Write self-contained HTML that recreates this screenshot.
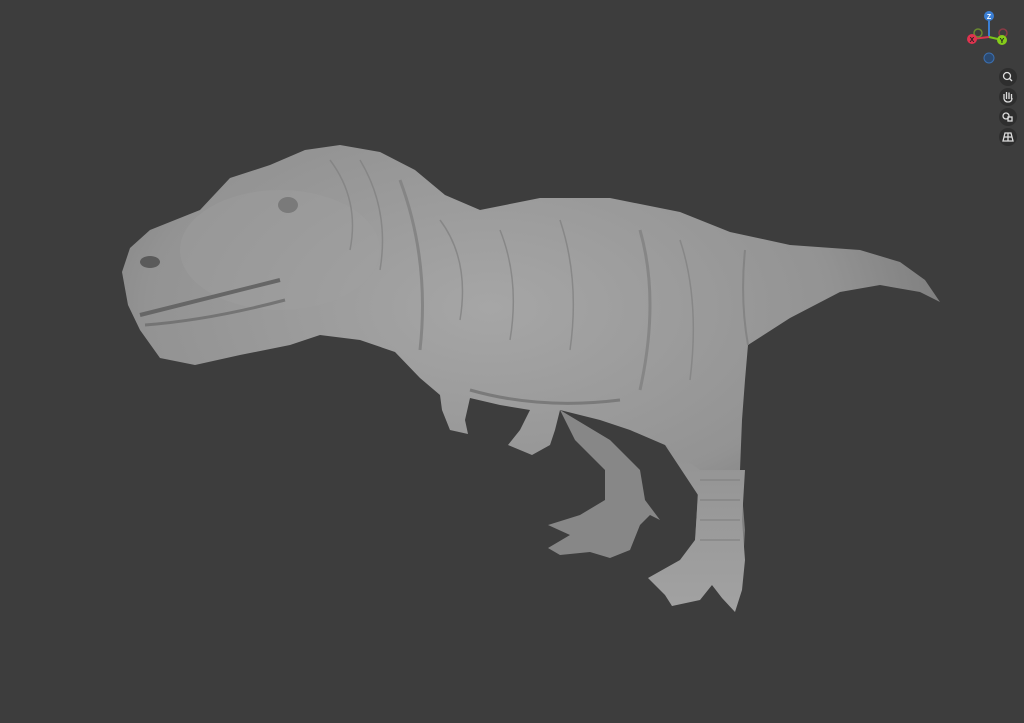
<!DOCTYPE html>
<html><head><meta charset="utf-8"><style>
html,body{margin:0;padding:0;background:#3d3d3d;width:1024px;height:723px;overflow:hidden;font-family:"Liberation Sans",sans-serif}
</style></head><body>
<svg width="1024" height="723" viewBox="0 0 1024 723" xmlns="http://www.w3.org/2000/svg">
<defs>
<radialGradient id="g" cx="0.45" cy="0.35" r="0.7">
<stop offset="0" stop-color="#a6a6a6"/><stop offset="0.6" stop-color="#939393"/><stop offset="1" stop-color="#6a6a6a"/>
</radialGradient>
<linearGradient id="leg" x1="0" y1="0" x2="0" y2="1">
<stop offset="0" stop-color="#939393"/><stop offset="1" stop-color="#a2a2a2"/>
</linearGradient>
</defs>
<rect width="1024" height="723" fill="#3d3d3d"/>
<path d="M560,410 L610,440 L640,470 L645,500 L660,520 L650,515 L640,525 L630,550 L610,558 L590,552 L560,555 L548,548 L570,535 L548,525 L580,515 L605,500 L605,470 L575,440 Z" fill="#878787"/>
<path d="M122,272 L130,248 L150,230 L200,210 L230,178 L270,165 L305,150 L340,145 L380,152 L415,170 L445,195 L480,210 L540,198 L610,198 L680,212 L730,232 L790,245 L860,250 L900,262 L925,280 L940,302 L920,292 L880,285 L840,292 L790,318 L748,345 L745,380 L742,420 L740,470 L745,530 L742,580 L735,610 L725,600 L712,585 L695,598 L672,606 L668,596 L650,578 L682,562 L695,545 L698,490 L690,465 L665,445 L630,430 L600,420 L560,410 L555,430 L550,445 L532,455 L508,445 L520,430 L530,410 L500,405 L470,398 L465,420 L468,434 L450,430 L442,410 L440,395 L420,378 L395,352 L360,340 L320,335 L290,345 L240,355 L195,365 L160,358 L140,330 L128,305 Z" fill="url(#g)"/>
<path d="M665,445 L700,470 L745,470 L742,520 L745,560 L742,590 L735,612 L722,598 L712,585 L700,600 L672,606 L665,595 L648,578 L680,560 L695,540 L698,495 Z" fill="url(#leg)"/>
<ellipse cx="280" cy="250" rx="100" ry="60" fill="#a0a0a0" opacity="0.35"/>
<ellipse cx="150" cy="262" rx="10" ry="6" fill="#5a5a5a"/>
<ellipse cx="288" cy="205" rx="10" ry="8" fill="#7a7a7a"/>
<path d="M140,315 Q200,300 280,280" stroke="#666" stroke-width="4" fill="none"/>
<path d="M145,325 Q210,320 285,300" stroke="#747474" stroke-width="3" fill="none"/>
<g stroke="#828282" stroke-width="1.5" fill="none" opacity="0.8">
<path d="M330,160 Q360,200 350,250"/><path d="M360,160 Q390,210 380,270"/><path d="M440,220 Q470,260 460,320"/>
<path d="M500,230 Q520,280 510,340"/><path d="M560,220 Q580,280 570,350"/><path d="M680,240 Q700,300 690,380"/>
<path d="M700,480 L740,480 M700,500 L740,500 M700,520 L740,520 M700,540 L740,540"/>
</g>
<path d="M400,180 Q430,260 420,350" stroke="#858585" stroke-width="3" fill="none"/>
<path d="M640,230 Q660,300 640,390" stroke="#868686" stroke-width="3" fill="none"/>
<path d="M745,250 Q740,300 748,345" stroke="#848484" stroke-width="2" fill="none"/>
<path d="M470,390 Q540,410 620,400" stroke="#7a7a7a" stroke-width="3" fill="none"/>
<circle cx="989" cy="16" r="5" fill="#3b7fd4"/>
<text x="989" y="19" font-size="7" text-anchor="middle" fill="#fff" font-weight="bold">Z</text>
<line x1="989" y1="21" x2="989" y2="37" stroke="#3b7fd4" stroke-width="2"/>
<line x1="989" y1="37" x2="972" y2="39" stroke="#d9344d" stroke-width="2"/>
<line x1="989" y1="37" x2="1002" y2="40" stroke="#7cc41a" stroke-width="2"/>
<circle cx="978" cy="33" r="4" fill="none" stroke="#6a8a30" stroke-width="1.5"/>
<circle cx="1003" cy="33" r="4" fill="none" stroke="#8a3a45" stroke-width="1.5"/>
<circle cx="972" cy="39" r="5" fill="#e0334f"/>
<text x="972" y="42" font-size="7" text-anchor="middle" fill="#222" font-weight="bold">X</text>
<circle cx="1002" cy="40" r="5" fill="#85cc1a"/>
<text x="1002" y="43" font-size="7" text-anchor="middle" fill="#222" font-weight="bold">Y</text>
<circle cx="989" cy="58" r="5" fill="#2c4a70" stroke="#3b6fb0" stroke-width="1"/>
<g fill="#2e2e2e"><circle cx="1008" cy="77" r="9"/><circle cx="1008" cy="97" r="9"/><circle cx="1008" cy="117" r="9"/><circle cx="1008" cy="137" r="9"/></g>
<g stroke="#ddd" fill="none" stroke-width="1.3">
<circle cx="1007" cy="76" r="3.5"/><line x1="1009.5" y1="78.5" x2="1012" y2="81"/>
<path d="M1004,99 L1004,94 M1006.5,99 L1006.5,92 M1009,99 L1009,92.5 M1011.5,99 L1011.5,94 M1004,99 Q1005,102 1008,102 Q1012,102 1012,98"/>
<circle cx="1006" cy="116" r="3"/><rect x="1008" y="117" width="4" height="4"/>
<path d="M1003,141 L1005,133 L1011,133 L1013,141 Z M1004,137 L1012,137 M1008,133 L1008,141"/>
</g>
</svg>
</body></html>
